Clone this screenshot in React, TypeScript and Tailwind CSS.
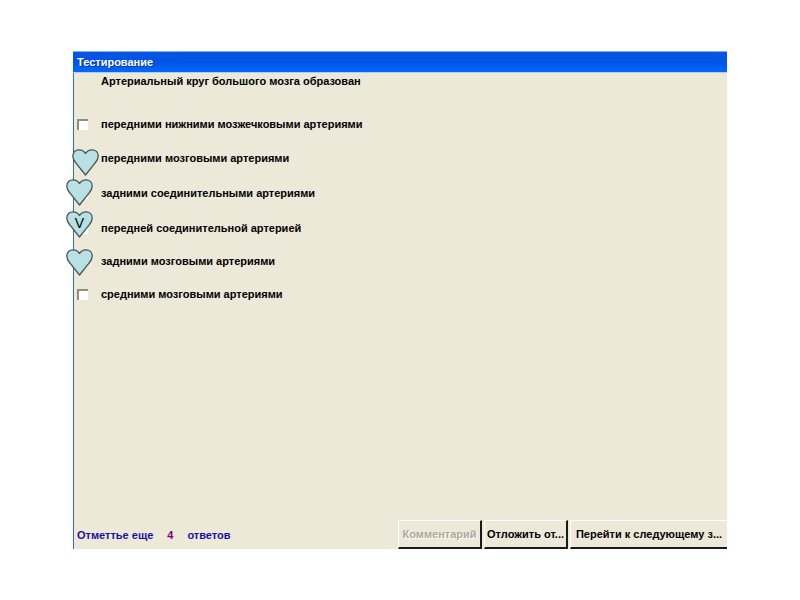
import { useState } from "react";

type Answer = {
  id: string;
  text: string;
  height: string;
  heart?: string;
  mark?: string;
};

const answers: Answer[] = [
  { id: "a1", text: "передними нижними мозжечковыми артериями", height: "h-[34px]" },
  { id: "a2", text: "передними мозговыми артериями", height: "h-[34px]", heart: "-left-0.5 top-2" },
  { id: "a3", text: "задними соединительными артериями", height: "h-9", heart: "-left-2 top-1" },
  { id: "a4", text: "передней соединительной артерией", height: "h-[34px]", heart: "-left-2 top-0", mark: "V" },
  { id: "a5", text: "задними мозговыми артериями", height: "h-8", heart: "-left-2 top-1" },
  { id: "a6", text: "средними мозговыми артериями", height: "h-[34px]" },
];

const buttonClass =
  "h-[29px] overflow-hidden border-t border-b-2 border-l border-t-white border-r-[#1c1a16] border-b-[#1c1a16] border-l-white bg-[#ece9d8] text-center whitespace-nowrap";

function Heart({ className, mark }: { className: string; mark?: string }) {
  return (
    <span className={`pointer-events-none absolute z-10 size-[27px] ${className}`}>
      <svg viewBox="0 0 27 27" className="absolute inset-0 size-full" aria-hidden="true">
        <path
          d="M13.5 4.5C15 2 17 0.8 20 0.8C23.500 0.8 26.200 3.200 26.200 7C26.200 9.500 25 12 23 14.200L13.500 26L4 14.200C2 12 0.800 9.500 0.800 7C0.800 3.200 3.500 0.800 7 0.800C10 0.800 12 2 13.500 4.500Z"
          fill="#b9e0e3"
          stroke="#45565b"
          strokeWidth="1.3"
          strokeLinejoin="round"
        />
      </svg>
      {mark && (
        <span className="absolute inset-x-0 top-1 text-center text-sm leading-4 font-normal">{mark}</span>
      )}
    </span>
  );
}

function AnswerRow({ answer }: { answer: Answer }) {
  const [checked, setChecked] = useState(false);
  return (
    <li className={`relative flex items-center pl-[3px] ${answer.height}`}>
      <input
        id={answer.id}
        type="checkbox"
        checked={checked}
        onChange={(e) => setChecked(e.target.checked)}
        className="size-[11px] shrink-0 appearance-none border-t-2 border-l-2 border-t-[#8f8c80] border-l-[#8f8c80] bg-white checked:bg-[#4a6ea9]"
      />
      <label htmlFor={answer.id} className="pl-[13px]">
        {answer.text}
      </label>
      {answer.heart && <Heart className={answer.heart} mark={answer.mark} />}
    </li>
  );
}

export default function App() {
  return (
    <div className="flex min-h-screen flex-col bg-white px-[73px] py-[51px] font-['Liberation_Sans',sans-serif] text-[11px] leading-4 font-bold text-black">
      <main className="flex flex-1 flex-col border-l border-l-[#2f6cc4] bg-[#ece9d8]">
        <header className="-ml-px flex h-[22px] items-center border-y border-t-[#7fb2f5] border-b-[#a9cdf8] bg-linear-to-b from-[#0a55e0] via-[#0054e6] to-[#0468fd] pl-1 text-white [text-shadow:1px_1px_0_#0f3a9c]">
          <h1>Тестирование</h1>
        </header>
        <h2 className="pl-[27px]">Артериальный круг большого мозга образован</h2>
        <ul className="mt-[18px]">
          {answers.map((answer) => (
            <AnswerRow key={answer.id} answer={answer} />
          ))}
        </ul>
        <footer className="mt-auto flex items-center">
          <p className="flex gap-3.5 pl-[3px] text-[#1a10a8]">
            <span>Отметтье еще</span>
            <span className="text-[#800080]">4</span>
            <span>ответов</span>
          </p>
          <div className="ml-auto flex gap-0.5">
            <button
              type="button"
              disabled
              className={`${buttonClass} w-[84px] border-r-2 text-[#aca899] [text-shadow:1px_1px_0_white]`}
            >
              Комментарий
            </button>
            <button type="button" className={`${buttonClass} w-[84px] border-r-2`}>
              Отложить от...
            </button>
            <button type="button" className={`${buttonClass} w-[157px]`}>
              Перейти к следующему з...
            </button>
          </div>
        </footer>
      </main>
    </div>
  );
}
